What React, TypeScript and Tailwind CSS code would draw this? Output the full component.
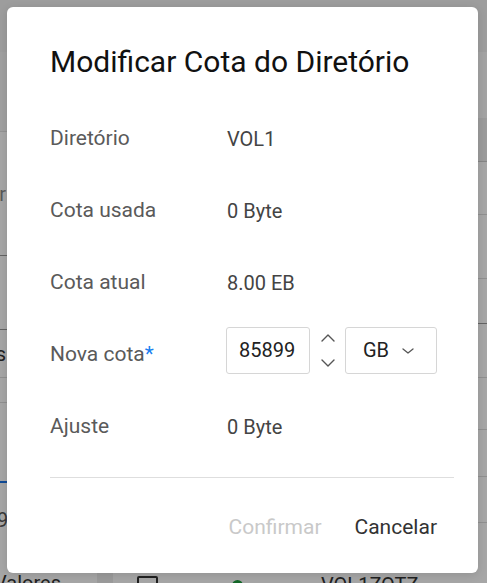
const ROWS = [
  { label: "Diretório", value: "VOL1" },
  { label: "Cota usada", value: "0 Byte" },
  { label: "Cota atual", value: "8.00 EB" },
];

function Chevron({ up, className }: { up?: boolean; className?: string }) {
  return (
    <svg width="14" height="8" viewBox="0 0 14 8" fill="none" className={className}>
      <polyline
        points={up ? "1,7 7,1 13,7" : "1,1 7,7 13,1"}
        stroke="currentColor"
        strokeWidth="1.4"
        strokeLinecap="round"
        strokeLinejoin="round"
      />
    </svg>
  );
}

function EdgeText({ children }: { children: React.ReactNode }) {
  return <div className="flex w-[6px] justify-end overflow-hidden whitespace-nowrap">{children}</div>;
}

function BackgroundPage() {
  return (
    <div className="flex h-[583px] w-[487px] flex-col bg-white font-['Roboto',sans-serif] text-[20px] text-[#333]">
      <div className="h-[52px] shrink-0 bg-[#f2f2f2]" />
      <div className="flex flex-1">
        <div className="flex w-[97px] flex-col text-[#888]">
          <div className="h-[80px] border-b border-[#e2e2e2] bg-[#f6f6f6]" />
          <div className="flex h-[123px] items-center">
            <EdgeText>Filtrar</EdgeText>
          </div>
          <div className="h-[75px] border-y border-[#999]" />
          <div className="flex h-[48px] items-center border-b border-[#ddd] text-[#333]">
            <EdgeText>Status</EdgeText>
          </div>
          <div className="h-[25px] border-b border-[#ddd]" />
          <div className="h-[80px] border-b-2 border-[#1a73e8]" />
          <div className="h-[85px] pt-[22px] text-[#555]">
            <div className="-ml-[3px]">9:</div>
          </div>
          <div className="-ml-[6px] text-[#333]">Valores</div>
        </div>
        <div className="w-[16px] bg-[#eeeeee]" />
        <div className="flex flex-1 flex-col">
          <div className="h-[66px] bg-[#fafafa]" />
          <div className="h-[44px] border-b border-[#ccc] bg-[#eeeeee]" />
          <div className="h-[53px] border-b border-[#ddd]" />
          <div className="h-[64px] border-b border-[#ddd]" />
          <div className="h-[45px] border-b border-[#999]" />
          <div className="h-[54px] border-b border-[#ddd]" />
          <div className="h-[52px] border-b border-[#ddd]" />
          <div className="h-[47px] border-b border-[#ddd]" />
          <div className="h-[46px] border-b border-[#ddd]" />
          <div className="flex items-center pt-[47px]">
            <span className="ml-[24px] h-[18px] w-[21px] rounded-[2px] border-2 border-[#333]" />
            <span className="ml-[74px] h-[11px] w-[11px] rounded-full bg-[#1e9e3e]" />
            <span className="ml-[78px]">VOL1ZOTZ</span>
          </div>
        </div>
      </div>
    </div>
  );
}

export default function App() {
  return (
    <div className="relative h-[583px] w-[487px] overflow-hidden">
      <BackgroundPage />
      <div className="absolute inset-0 bg-black/35" />
      <div className="absolute left-[7px] top-[7px] flex h-[566px] w-[471px] flex-col rounded-[6px] bg-white pl-[43px] pr-[24px] font-['Roboto',sans-serif] shadow-[0_2px_10px_rgba(0,0,0,0.12)]">
        <h2 className="flex h-[96px] shrink-0 items-center pt-[12px] text-[30px] font-normal text-[#111]">
          Modificar Cota do Diretório
        </h2>
        {ROWS.map((r) => (
          <div key={r.label} className="flex h-[72px] shrink-0 items-center">
            <span className="w-[177px] text-[21px] text-[#5a5a5a]">{r.label}</span>
            <span className="text-[20px] text-[#444]">{r.value}</span>
          </div>
        ))}
        <div className="flex h-[72px] shrink-0 items-center">
          <span className="w-[176px] text-[21px] text-[#5a5a5a]">
            Nova cota<span className="text-[#1a7ff0]">*</span>
          </span>
          <div className="-mt-[10px] flex items-center">
            <div className="flex h-[47px] w-[84px] items-center rounded-[3px] border border-[#d6d6d6] pl-[12px] text-[20px] text-[#222]">
              85899
            </div>
            <div className="ml-[11px] mr-[10px] flex flex-col items-center gap-[17px] text-[#555]">
              <Chevron up />
              <Chevron />
            </div>
            <div className="flex h-[47px] w-[92px] items-center rounded-[3px] border border-[#d6d6d6] pl-[17px] text-[20px] text-[#222]">
              GB
              <svg width="12" height="6" viewBox="0 0 12 6" fill="none" className="ml-[13px] mt-[1px] text-[#555]">
                <polyline points="1,1 6,5 11,1" stroke="currentColor" strokeWidth="1.3" strokeLinecap="round" strokeLinejoin="round" />
              </svg>
            </div>
          </div>
        </div>
        <div className="flex h-[72px] shrink-0 items-center">
          <span className="w-[177px] text-[21px] text-[#5a5a5a]">Ajuste</span>
          <span className="text-[20px] text-[#444]">0 Byte</span>
        </div>
        <div className="mt-[14px] border-t border-[#dedede]" />
        <div className="flex h-[98px] items-center justify-end gap-[33px] pr-[17px] pt-[4px] text-[21px]">
          <span className="text-[#c9c9c9]">Confirmar</span>
          <span className="text-[#333]">Cancelar</span>
        </div>
      </div>
    </div>
  );
}
